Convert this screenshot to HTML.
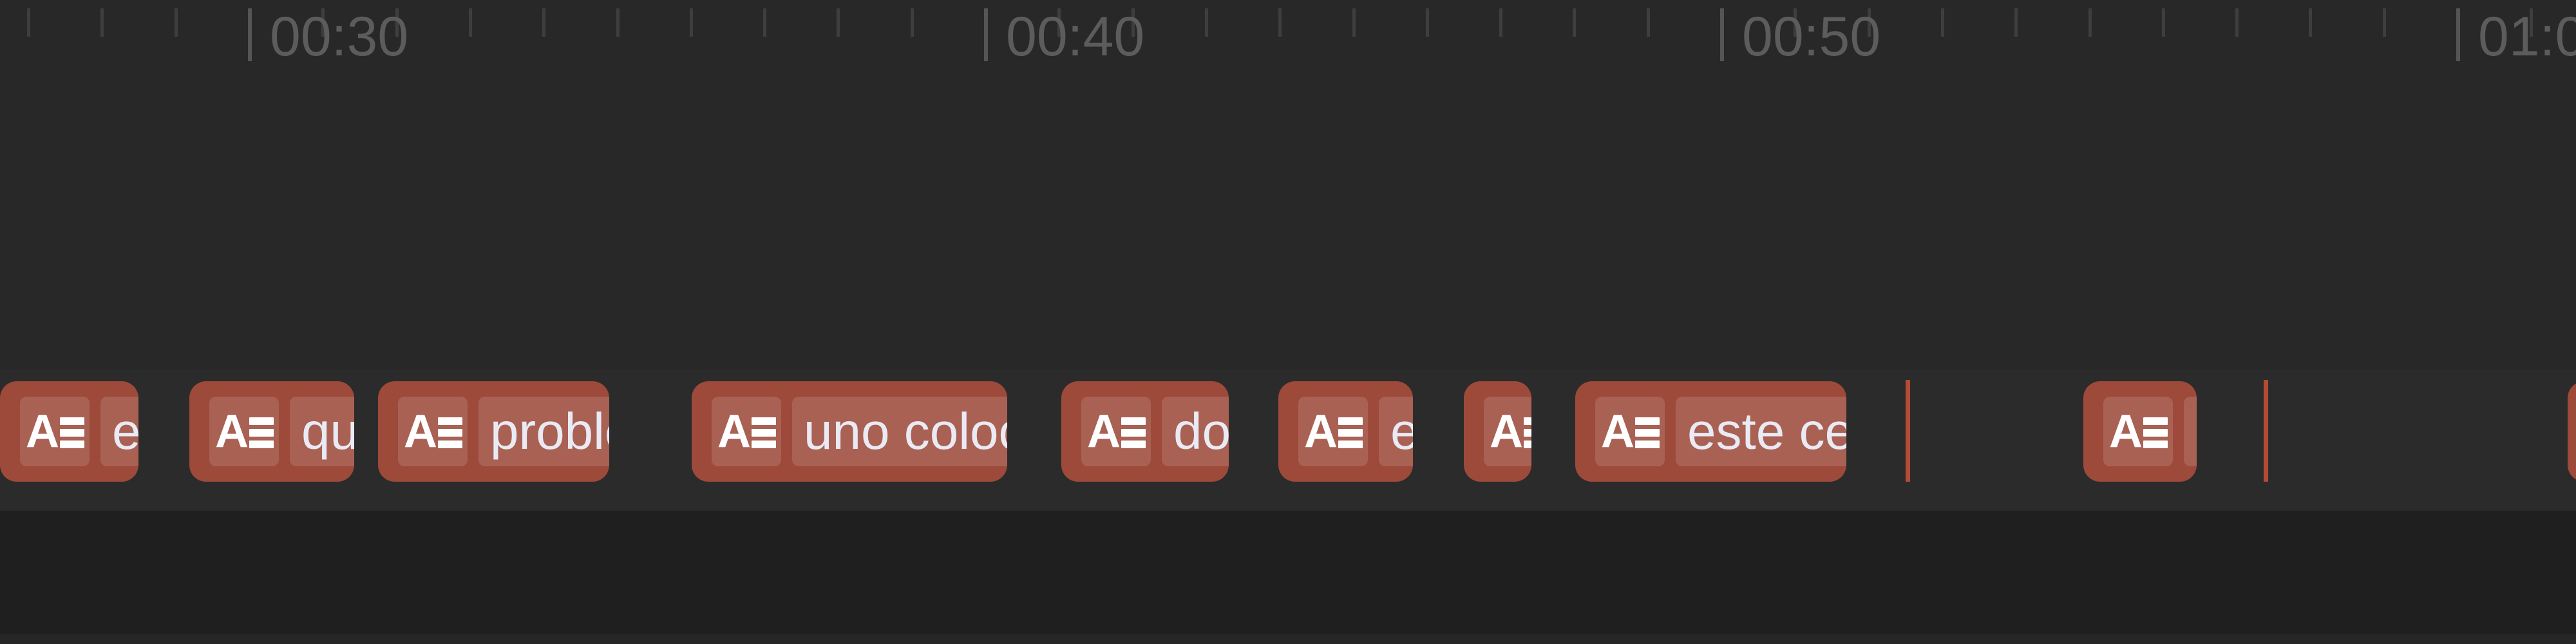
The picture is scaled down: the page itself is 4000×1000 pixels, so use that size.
<!DOCTYPE html>
<html><head><meta charset="utf-8"><style>
*{margin:0;padding:0;box-sizing:border-box}
body{width:4000px;height:1000px;overflow:hidden;background:#282828;position:relative;font-family:"Liberation Sans",sans-serif}
.band{position:absolute;left:0;width:4000px}
.t{position:absolute;top:13px;width:6px;background:#444}
.t.min{height:44px;width:5px;background:#3e3e3e}
.t.maj{height:82px;background:#555}
.lbl{position:absolute;top:14px;font-size:86px;color:#5c5c5c;line-height:1}
.clip{position:absolute;top:592px;height:156px;background:#9d4a3b;border-radius:26px;overflow:hidden}
.ic{position:absolute;left:31px;top:24px;width:108px;height:108px;background:rgba(255,255,255,.13);border-radius:10px}
.ic b{position:absolute;left:9px;top:18px;font-size:72px;font-weight:bold;color:#fff;line-height:1}
.ic i{position:absolute;left:62px;width:38px;height:12px;background:#fff;border-radius:1px}
.tx{position:absolute;left:156px;top:24px;height:108px;right:-400px;background:rgba(255,255,255,.13);border-radius:10px;color:#eaeaf4;font-size:80px;line-height:108px;padding-left:18px;white-space:nowrap}
.line{position:absolute;top:590px;height:158px;width:7px;background:#b54b33}
</style></head><body>
<div class="band" style="top:574px;height:219px;background:#2b2b2b"></div>
<div class="band" style="top:793px;height:192px;background:#1f1f1f"></div>
<div class="band" style="top:985px;height:15px;background:#262626"></div>
<div id="ticks"></div>
<div class="lbl" style="left:419px">00:30</div>
<div class="lbl" style="left:1562px">00:40</div>
<div class="lbl" style="left:2705px">00:50</div>
<div class="lbl" style="left:3848px">01:00</div>

<div class="clip" style="left:0;width:215px"><div class="ic"><b>A</b><i style="top:32px"></i><i style="top:50px"></i><i style="top:68px"></i></div><div class="tx">e</div></div>
<div class="clip" style="left:294px;width:256px"><div class="ic"><b>A</b><i style="top:32px"></i><i style="top:50px"></i><i style="top:68px"></i></div><div class="tx">qu</div></div>
<div class="clip" style="left:587px;width:359px"><div class="ic"><b>A</b><i style="top:32px"></i><i style="top:50px"></i><i style="top:68px"></i></div><div class="tx">problema</div></div>
<div class="clip" style="left:1074px;width:490px"><div class="ic"><b>A</b><i style="top:32px"></i><i style="top:50px"></i><i style="top:68px"></i></div><div class="tx">uno colocar</div></div>
<div class="clip" style="left:1648px;width:260px"><div class="ic"><b>A</b><i style="top:32px"></i><i style="top:50px"></i><i style="top:68px"></i></div><div class="tx">do</div></div>
<div class="clip" style="left:1985px;width:209px"><div class="ic"><b>A</b><i style="top:32px"></i><i style="top:50px"></i><i style="top:68px"></i></div><div class="tx">e</div></div>
<div class="clip" style="left:2273px;width:105px"><div class="ic"><b>A</b><i style="top:32px"></i><i style="top:50px"></i><i style="top:68px"></i></div></div>
<div class="clip" style="left:2446px;width:421px"><div class="ic"><b>A</b><i style="top:32px"></i><i style="top:50px"></i><i style="top:68px"></i></div><div class="tx">este cerebro</div></div>
<div class="line" style="left:2959px"></div>
<div class="clip" style="left:3235px;width:176px"><div class="ic"><b>A</b><i style="top:32px"></i><i style="top:50px"></i><i style="top:68px"></i></div><div class="tx"></div></div>
<div class="line" style="left:3515px"></div>
<div class="clip" style="left:3987px;width:60px"></div>
<script>
var h='';
for(var k=-3;k<34;k++){var x=385+k*114.3;if(x<0||x>4000)continue;
var maj=(k%10===0);h+='<div class="t '+(maj?'maj':'min')+'" style="left:'+Math.round(x)+'px"></div>';}
document.getElementById('ticks').innerHTML=h;
</script>
</body></html>
